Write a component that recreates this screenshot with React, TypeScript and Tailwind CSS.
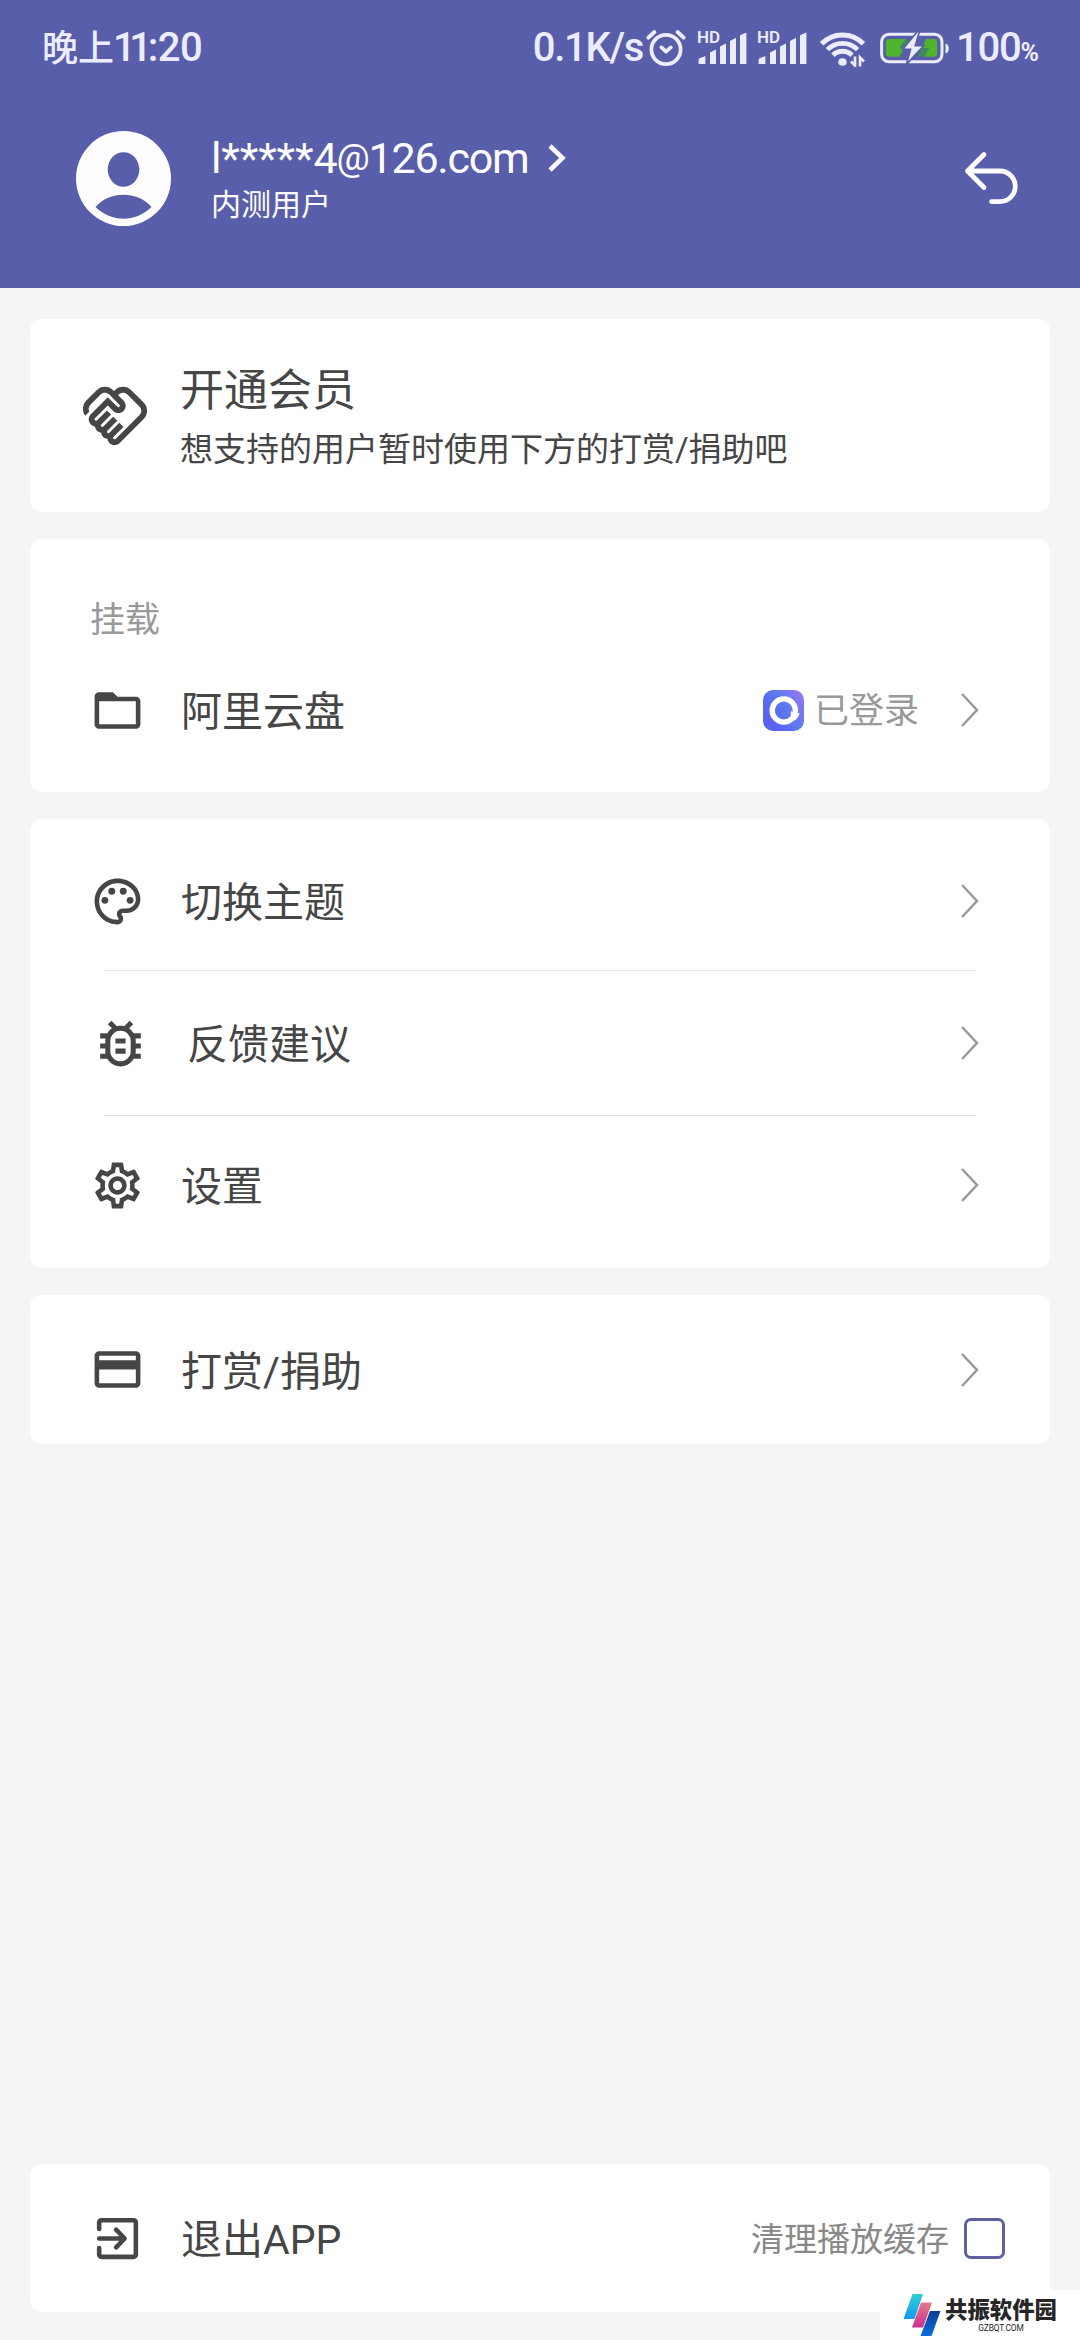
import type { ReactNode } from "react";
import {
  MdFolderOpen,
  MdOutlineBugReport,
  MdOutlineHandshake,
  MdOutlinePalette,
  MdOutlineSettings,
  MdPayment,
} from "react-icons/md";

function AlarmIcon() {
  return (
    <svg width="42" height="40" viewBox="0 0 42 40" fill="none" stroke="currentColor" strokeLinecap="round">
      <circle cx="21" cy="21.5" r="14.6" strokeWidth="3.8" />
      <path d="M3.4 9.6 9.4 4M38.6 9.6 32.6 4" strokeWidth="4" />
      <path d="M16.4 19.4 21 23.6l4.8-4.2" strokeWidth="3.8" strokeLinejoin="round" />
    </svg>
  );
}

function Signal() {
  return (
    <div className="relative h-[34px] w-[50px]">
      <span className="absolute -top-px left-0 text-[17px] leading-[14px] font-semibold">HD</span>
      <svg className="absolute inset-0" width="50" height="34" viewBox="0 0 50 34" fill="currentColor">
        <path d="M2 27.6 8.4 25v8H1.6v-3.6z" />
        <path d="M13 21.6 19 18.4V33h-6z" />
        <path d="M23 15.4 29 12.4V33h-6z" />
        <path d="M33 10 39 6.8V33h-6z" />
        <path d="M43 4.2 49.4 1.4V33H43z" />
      </svg>
    </div>
  );
}

function WifiIcon() {
  return (
    <svg width="47" height="37" viewBox="0 0 47 37" fill="none" stroke="currentColor">
      <path d="M2.6 13.8a29 29 0 0 1 41.8 0" strokeWidth="5" />
      <path d="M8.4 19.6a21.2 21.2 0 0 1 30.2 0" strokeWidth="4.8" />
      <path d="M14 25.2a13.4 13.4 0 0 1 19 0" strokeWidth="4.8" />
      <ellipse cx="23.5" cy="32" rx="4.2" ry="3.8" fill="currentColor" stroke="none" />
      <path d="M36 26.5v9l-4-4M41 36.5v-9l4 4" strokeWidth="2.6" />
    </svg>
  );
}

function BatteryIcon() {
  return (
    <svg width="70" height="34" viewBox="0 0 70 34" fill="none">
      <rect x="1.6" y="3.2" width="60.4" height="27.6" rx="7.5" stroke="currentColor" strokeWidth="3" />
      <path d="M66 13c3 .6 3 8.4 0 9z" fill="currentColor" stroke="currentColor" />
      <rect x="6" y="8" width="51" height="17.8" rx="3" fill="#4fb52a" />
      <path d="M26 8 19 17.2h5.6L19 25.8h25l5-8.8h-7L46 8z" fill="#595eaa" />
      <path d="M25.5 9 20 17h8l3-8zM43.5 25l5.5-8h-8l-3 8z" fill="#3f8a58" />
      <path d="M37.5.5 22.6 18.4h8L26.4 33.4 43.6 14.8h-8.4L39.5.5z" fill="currentColor" stroke="#595eaa" strokeWidth="1.6" />
    </svg>
  );
}

function StatusBar() {
  return (
    <div className="flex h-24 items-center pl-[42px] text-[40px] leading-none font-medium text-[#ebecfd]">
      <span className="pt-px text-[36px]">晚上</span>
      <span className="-ml-px tracking-[-6.4px]">11</span>
      <span className="pl-[2px] tracking-[-0.5px]">:20</span>
      <span className="ml-auto tracking-[-1.3px]">0.1K/s</span>
      <div className="ml-[2px]">
        <AlarmIcon />
      </div>
      <div className="ml-[10px] flex gap-[10px]">
        <Signal />
        <Signal />
      </div>
      <div className="ml-[12px]">
        <WifiIcon />
      </div>
      <div className="ml-[14px]">
        <BatteryIcon />
      </div>
      <div className="ml-[6px] flex w-[124px] items-baseline">
        <span className="tracking-[-1.2px]">100</span>
        <span className="text-[25px] font-bold">%</span>
      </div>
    </div>
  );
}

function Avatar() {
  return (
    <svg width="95" height="95" viewBox="0 0 95 95">
      <circle cx="47.5" cy="47.5" r="47.5" fill="#fdfdff" />
      <ellipse cx="47.5" cy="38.5" rx="15.8" ry="17.2" fill="#595eaa" />
      <path d="M19.5 76C33 59.5 62 59.5 75.5 76 60 91.5 35 91.5 19.5 76z" fill="#595eaa" />
    </svg>
  );
}

function Header() {
  return (
    <header className="h-[288px] bg-[#595eaa] text-[#fdfdff]">
      <StatusBar />
      <div className="flex items-start pt-[35px] pl-[76px]">
        <Avatar />
        <div className="ml-[40px]">
          <div className="flex h-[54px] items-center">
            <div className="w-[337px] text-[43px] leading-[54px] whitespace-nowrap">
              <span className="tracking-[-0.1px]">l*****</span>
              <span className="tracking-[-1.2px]">
                4<span className="relative -top-[3px] text-[37px] leading-none">@</span>126.com
              </span>
            </div>
            <svg width="20" height="30" viewBox="0 0 20 30" fill="none" stroke="currentColor" strokeWidth="4.6">
              <path d="M2 3l12.5 12L2 27" />
            </svg>
          </div>
          <p className="text-[30px] leading-[39px]">内测用户</p>
        </div>
        <svg
          className="mt-[19px] mr-[61px] ml-auto"
          width="56"
          height="56"
          viewBox="0 0 56 56"
          fill="none"
          stroke="currentColor"
          strokeWidth="4.8"
          strokeLinecap="round"
          strokeLinejoin="round"
        >
          <path d="M21 4.5 4.5 21 21 37.5M4.5 21H37a15.3 15.3 0 0 1 0 30.6h-8.5" />
        </svg>
      </div>
    </header>
  );
}

function Chevron() {
  return (
    <svg className="mr-[69px] shrink-0" width="22" height="36" viewBox="0 0 22 36" fill="none" stroke="#999" strokeWidth="2.5">
      <path d="M3 2l15 16L3 34" />
    </svg>
  );
}

function Row({ icon, label, children }: { icon: ReactNode; label: string; children?: ReactNode }) {
  return (
    <div className="flex h-[60px] items-center pl-[60px]">
      {icon}
      <span className="ml-[36px] pt-[5px] text-[41px] leading-[55px]">{label}</span>
      <div className="ml-auto flex items-center">{children ?? <Chevron />}</div>
    </div>
  );
}

function DriveLogo() {
  return (
    <svg width="41" height="41" viewBox="0 0 41 41" fill="none">
      <defs>
        <linearGradient id="drive" x1="0.1" y1="0.6" x2="0.9" y2="0.1">
          <stop offset="0" stopColor="#5a62f0" />
          <stop offset="0.5" stopColor="#5b7bee" />
          <stop offset="1" stopColor="#9176f2" />
        </linearGradient>
      </defs>
      <rect width="41" height="41" rx="10" fill="url(#drive)" />
      <circle cx="20.8" cy="20.5" r="11.6" stroke="#fff" strokeWidth="5.4" />
      <path d="M28 20.5q1.5 3.4 8.6 2.4-1 4.6-5 7.6l-4-4z" fill="#fff" />
    </svg>
  );
}

function ExitIcon() {
  return (
    <svg
      width="55"
      height="55"
      viewBox="0 0 24 24"
      fill="none"
      stroke="currentColor"
      strokeWidth="2"
      strokeLinecap="round"
      strokeLinejoin="round"
    >
      <path d="M4 7.8V5a1 1 0 0 1 1-1h14a1 1 0 0 1 1 1v14a1 1 0 0 1-1 1H5a1 1 0 0 1-1-1v-2.8" />
      <path d="M4 12h10.5M11.4 8.1l3.7 3.9-3.7 3.9" />
    </svg>
  );
}

function Watermark() {
  return (
    <div className="absolute right-0 bottom-0 flex h-[50px] w-[200px] bg-white pl-[23px]">
      <svg className="mt-[3px]" width="38" height="44" viewBox="0 0 38 44">
        <defs>
          <linearGradient id="cyan" x1="0" y1="0" x2="0" y2="1">
            <stop offset="0" stopColor="#2fd0cf" />
            <stop offset="1" stopColor="#1597f5" />
          </linearGradient>
          <linearGradient id="pink" x1="0" y1="0" x2="0" y2="1">
            <stop offset="0" stopColor="#e57b86" />
            <stop offset="1" stopColor="#cc2f92" />
          </linearGradient>
          <linearGradient id="navy" x1="0" y1="0" x2="0" y2="1">
            <stop offset="0" stopColor="#0b3d91" />
            <stop offset="1" stopColor="#0a6ee0" />
          </linearGradient>
        </defs>
        <path d="M9.5 1H20L11.5 26H.5z" fill="url(#cyan)" />
        <path d="M18 9.500h11L20 34.500H9z" fill="url(#pink)" />
        <path d="M27 18h10.500L28.500 43H17.500z" fill="url(#navy)" />
      </svg>
      <div className="ml-[4px] flex flex-col items-center pt-[8px] text-[#262626]">
        <span className="text-[22.4px] leading-[25px] font-black whitespace-nowrap">共振软件园</span>
        <span className="text-[8.4px] leading-[10px] tracking-[-0.1px]">GZBQT.COM</span>
      </div>
    </div>
  );
}

export default function App() {
  return (
    <div className="relative flex h-[2340px] w-[1080px] flex-col overflow-hidden bg-[#f5f5f8] font-[Roboto,'Noto_Sans_CJK_SC',sans-serif] text-[#464646]">
      <Header />
      <main className="flex flex-1 flex-col gap-[27px] px-[30px] pt-[31px] pb-[28px]">
        <section className="flex h-[193px] items-center rounded-xl bg-white pl-[50px]">
          <MdOutlineHandshake size={70} />
          <div className="ml-[30px] pt-[9px]">
            <h2 className="text-[44px] leading-[60px]">开通会员</h2>
            <p className="text-[33px] leading-[58px]">想支持的用户暂时使用下方的打赏/捐助吧</p>
          </div>
        </section>

        <section className="h-[253px] rounded-xl bg-white pt-[57px]">
          <p className="pl-[60px] text-[35px] leading-[50px] text-[#999]">挂载</p>
          <div className="pt-[34px]">
            <Row icon={<MdFolderOpen size={55} />} label="阿里云盘">
              <DriveLogo />
              <span className="mr-[40px] ml-[10px] pt-[4px] text-[35px] leading-[50px] text-[#999]">已登录</span>
              <Chevron />
            </Row>
          </div>
        </section>

        <section className="flex h-[449px] flex-col rounded-xl bg-white pt-[52px]">
          <Row icon={<MdOutlinePalette size={55} />} label="切换主题" />
          <div className="mx-[74px] mt-[39px] mb-[42px] h-px bg-[#e4e4e4]" />
          <Row icon={<MdOutlineBugReport size={61} />} label="反馈建议" />
          <div className="mx-[74px] mt-[42px] mb-[39px] h-px bg-[#e2e2e2]" />
          <Row icon={<MdOutlineSettings size={55} />} label="设置" />
        </section>

        <section className="flex h-[149px] flex-col justify-center rounded-xl bg-white">
          <Row icon={<MdPayment size={55} />} label="打赏/捐助" />
        </section>

        <section className="mt-auto flex h-[148px] flex-col justify-center rounded-xl bg-white">
          <Row icon={<ExitIcon />} label="退出APP">
            <span className="pt-[4px] text-[33px] leading-[50px] text-[#888]">清理播放缓存</span>
            <span className="mr-[45px] ml-[15px] size-[41px] rounded-[7px] border-[3px] border-[#5f609f]" />
          </Row>
        </section>
      </main>
      <Watermark />
    </div>
  );
}
